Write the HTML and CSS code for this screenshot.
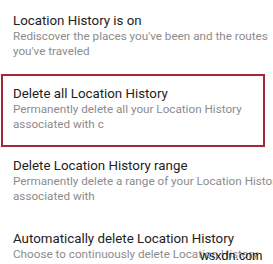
FILE: index.html
```html
<!DOCTYPE html>
<html>
<head>
<meta charset="utf-8">
<link rel="stylesheet" href="styles.css">
</head>
<body>
<div class="list">
  <div class="item first">
    <div class="title">Location History is on</div>
    <div class="sub">Rediscover the places you've been and the routes</div>
    <div class="sub">you've traveled</div>
  </div>
  <div class="item boxed">
    <div class="title">Delete all Location History</div>
    <div class="sub">Permanently delete all your Location History</div>
    <div class="sub">associated with c</div>
  </div>
  <div class="item">
    <div class="title">Delete Location History range</div>
    <div class="sub">Permanently delete a range of your Location History</div>
    <div class="sub">associated with</div>
  </div>
  <div class="item last">
    <div class="title">Automatically delete Location History</div>
    <div class="sub">Choose to continuously delete Location History</div>
  </div>
</div>
<div class="mark">wsxdn.com</div>
</body>
</html>
```
FILE: styles.css
```css
html, body {
  margin: 0;
  padding: 0;
  background: #fff;
  overflow: hidden;
  width: 273px;
  height: 264px;
}
body {
  position: relative;
  font-family: Roboto, "Liberation Sans", sans-serif;
}
.list {
  display: flex;
  flex-direction: column;
}
.item {
  box-sizing: border-box;
  height: 73px;
  padding: 11px 0 0 13px;
  white-space: nowrap;
}
.first {
  height: 74px;
  padding-top: 13px;
}
.boxed {
  height: 73px;
  margin: 0 8px 0 1px;
  border: 2px solid #a3283a;
  padding: 10px 0 0 10px;
}
.title {
  font-size: 13.3px;
  line-height: 16px;
  color: #222;
}
.sub {
  font-size: 11.7px;
  line-height: 15px;
  color: #8c8c8c;
}
.mark {
  position: absolute;
  left: 200px;
  top: 249px;
  font-size: 12.5px;
  line-height: 14px;
  color: #111;
  font-family: "Liberation Sans", sans-serif;
}
```
